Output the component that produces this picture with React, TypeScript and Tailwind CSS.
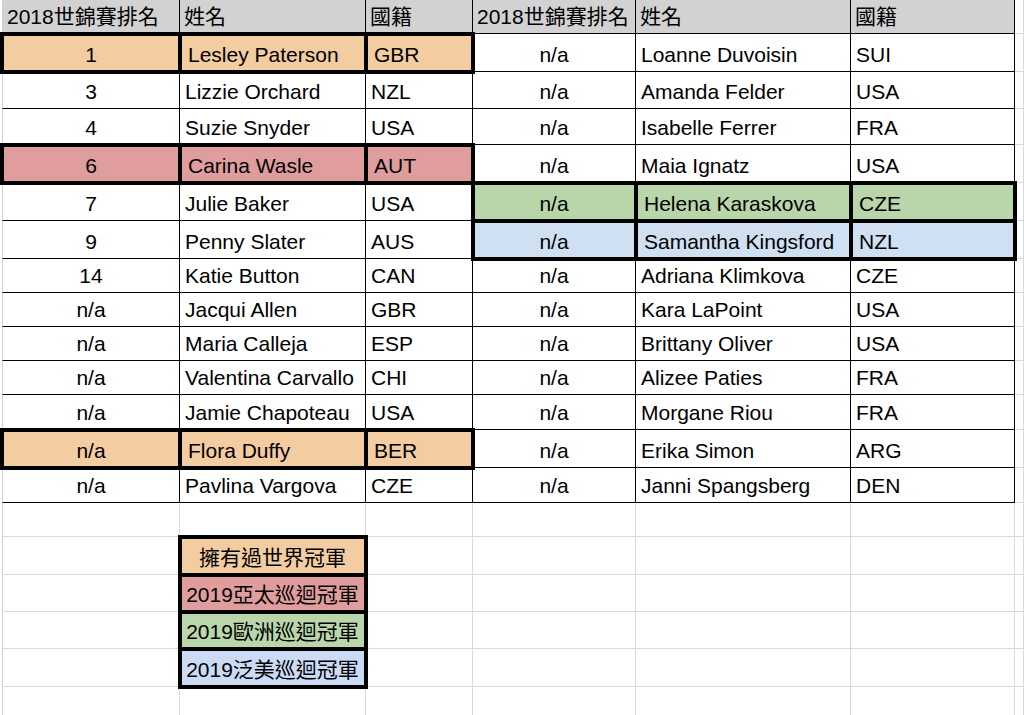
import React from "react";

type Hl = "orange" | "red" | "green" | "blue" | null;

const fills: Record<string, string> = {
  orange: "bg-[#f3cca1]",
  red: "bg-[#e09d9d]",
  green: "bg-[#b8d6a9]",
  blue: "bg-[#cfe0f2]",
};

const legendFills: Record<string, string> = {
  orange: "bg-[#f4cca2]",
  red: "bg-[#e09d9d]",
  green: "bg-[#b9d7aa]",
  blue: "bg-[#cbdbf6]",
};

const leftRows: [string, string, string, Hl][] = [
  ["1", "Lesley Paterson", "GBR", "orange"],
  ["3", "Lizzie Orchard", "NZL", null],
  ["4", "Suzie Snyder", "USA", null],
  ["6", "Carina Wasle", "AUT", "red"],
  ["7", "Julie Baker", "USA", null],
  ["9", "Penny Slater", "AUS", null],
  ["14", "Katie Button", "CAN", null],
  ["n/a", "Jacqui Allen", "GBR", null],
  ["n/a", "Maria Calleja", "ESP", null],
  ["n/a", "Valentina Carvallo", "CHI", null],
  ["n/a", "Jamie Chapoteau", "USA", null],
  ["n/a", "Flora Duffy", "BER", "orange"],
  ["n/a", "Pavlina Vargova", "CZE", null],
];

const rightRows: [string, string, string, Hl][] = [
  ["n/a", "Loanne Duvoisin", "SUI", null],
  ["n/a", "Amanda Felder", "USA", null],
  ["n/a", "Isabelle Ferrer", "FRA", null],
  ["n/a", "Maia Ignatz", "USA", null],
  ["n/a", "Helena Karaskova", "CZE", "green"],
  ["n/a", "Samantha Kingsford", "NZL", "blue"],
  ["n/a", "Adriana Klimkova", "CZE", null],
  ["n/a", "Kara LaPoint", "USA", null],
  ["n/a", "Brittany Oliver", "USA", null],
  ["n/a", "Alizee Paties", "FRA", null],
  ["n/a", "Morgane Riou", "FRA", null],
  ["n/a", "Erika Simon", "ARG", null],
  ["n/a", "Janni Spangsberg", "DEN", null],
];

const dataHeights = [
  "h-[38px]",
  "h-[37px]",
  "h-[36px]",
  "h-[38px]",
  "h-[38px]",
  "h-[38px]",
  "h-[34px]",
  "h-[34px]",
  "h-[34px]",
  "h-[34px]",
  "h-[35px]",
  "h-[38px]",
  "h-[35px]",
];

const blankRows: { h: string; legend?: [string, string] }[] = [
  { h: "h-[34px]" },
  { h: "h-[38px]", legend: ["擁有過世界冠軍", "orange"] },
  { h: "h-[37px]", legend: ["2019亞太巡迴冠軍", "red"] },
  { h: "h-[37px]", legend: ["2019歐洲巡迴冠軍", "green"] },
  { h: "h-[38px]", legend: ["2019泛美巡迴冠軍", "blue"] },
  { h: "h-[38px]" },
];

const dark = "border-r border-b border-black";
const light = "border-r border-b border-[#dadada]";
const thick = "relative z-10 outline-4 outline-black -outline-offset-2";

function Cell({
  className,
  children,
}: {
  className: string;
  children?: React.ReactNode;
}) {
  return (
    <div className={`flex shrink-0 items-end pb-[4px] leading-[24px] whitespace-nowrap ${className}`}>
      {children}
    </div>
  );
}

function Group({ row, first }: { row: [string, string, string, Hl]; first: boolean }) {
  const [rank, name, nat, hl] = row;
  const fx = hl ? `${thick} ${fills[hl]}` : "";
  const pad = hl ? "pl-[8px]" : "pl-[5px]";
  return (
    <>
      <Cell
        className={`${first ? "w-[178px] border-l border-l-[#d0d0d0]" : "w-[163px]"} justify-center ${dark} ${fx}`}
      >
        {rank}
      </Cell>
      <Cell className={`${first ? "w-[186px]" : "w-[215px]"} ${pad} ${dark} ${fx}`}>{name}</Cell>
      <Cell className={`${first ? "w-[107px]" : "w-[164px]"} ${pad} ${dark} ${fx}`}>{nat}</Cell>
    </>
  );
}

export default function App() {
  const head = "bg-[#d2d2d2] pl-[4px]";
  return (
    <div className="w-[1024px] h-[715px] overflow-hidden bg-white pl-[2px] text-[21px] text-black font-['Liberation_Sans','Noto_Sans_CJK_TC',sans-serif]">
      <div className="flex h-[34px]">
        <Cell className={`w-[178px] border-l border-l-[#d0d0d0] ${head} ${dark}`}>2018世錦賽排名</Cell>
        <Cell className={`w-[186px] ${head} ${dark}`}>姓名</Cell>
        <Cell className={`w-[107px] ${head} ${dark}`}>國籍</Cell>
        <Cell className={`w-[163px] ${head} ${dark}`}>2018世錦賽排名</Cell>
        <Cell className={`w-[215px] ${head} ${dark}`}>姓名</Cell>
        <Cell className={`w-[164px] ${head} ${dark}`}>國籍</Cell>
        <Cell className={`flex-1 ${light}`} />
      </div>

      {leftRows.map((l, i) => (
        <div key={i} className={`flex ${dataHeights[i]}`}>
          <Group row={l} first />
          <Group row={rightRows[i]} first={false} />
          <Cell className={`flex-1 ${light}`} />
        </div>
      ))}

      {blankRows.map((r, i) => (
        <div key={i} className={`flex ${r.h}`}>
          <Cell className={`w-[178px] border-l border-l-[#d0d0d0] ${light}`} />
          {r.legend ? (
            <Cell
              className={`w-[186px] justify-center ${light} ${thick} ${legendFills[r.legend[1]]}`}
            >
              {r.legend[0]}
            </Cell>
          ) : (
            <Cell className={`w-[186px] ${light}`} />
          )}
          <Cell className={`w-[107px] ${light}`} />
          <Cell className={`w-[163px] ${light}`} />
          <Cell className={`w-[215px] ${light}`} />
          <Cell className={`w-[164px] ${light}`} />
          <Cell className={`flex-1 ${light}`} />
        </div>
      ))}
    </div>
  );
}
